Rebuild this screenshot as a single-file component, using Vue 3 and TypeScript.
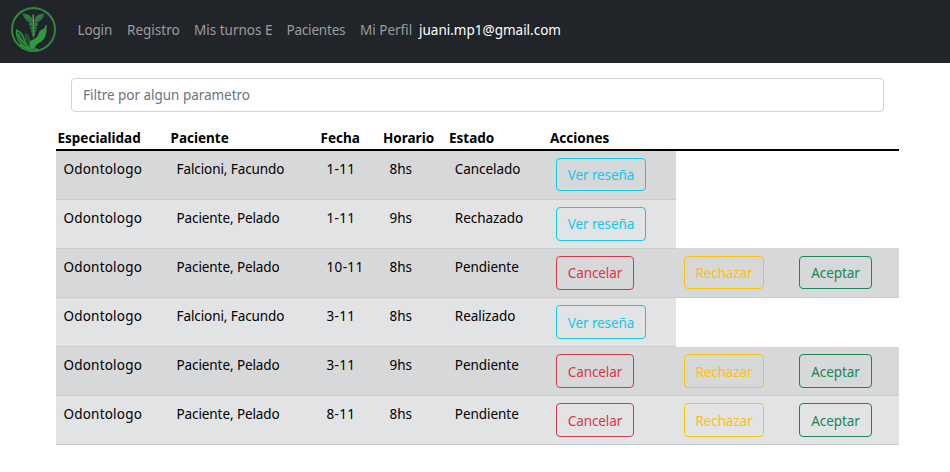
<script setup lang="ts">
import { ref, computed } from 'vue'

interface Turno {
  especialidad: string
  paciente: string
  fecha: string
  horario: string
  estado: string
}

const links = [
  { texto: 'Login', clase: 'login' },
  { texto: 'Registro', clase: 'registro' },
  { texto: 'Mis turnos E', clase: 'turnos' },
  { texto: 'Pacientes', clase: 'pacientes' },
  { texto: 'Mi Perfil', clase: 'perfil' },
]

const columnas = ['Especialidad', 'Paciente', 'Fecha', 'Horario', 'Estado', 'Acciones']

const turnos: Turno[] = [
  { especialidad: 'Odontologo', paciente: 'Falcioni, Facundo', fecha: '1-11', horario: '8hs', estado: 'Cancelado' },
  { especialidad: 'Odontologo', paciente: 'Paciente, Pelado', fecha: '1-11', horario: '9hs', estado: 'Rechazado' },
  { especialidad: 'Odontologo', paciente: 'Paciente, Pelado', fecha: '10-11', horario: '8hs', estado: 'Pendiente' },
  { especialidad: 'Odontologo', paciente: 'Falcioni, Facundo', fecha: '3-11', horario: '8hs', estado: 'Realizado' },
  { especialidad: 'Odontologo', paciente: 'Paciente, Pelado', fecha: '3-11', horario: '9hs', estado: 'Pendiente' },
  { especialidad: 'Odontologo', paciente: 'Paciente, Pelado', fecha: '8-11', horario: '8hs', estado: 'Pendiente' },
]

const filtro = ref('')
const filtrados = computed(() =>
  turnos.filter((t) => Object.values(t).join(' ').toLowerCase().includes(filtro.value.toLowerCase())),
)
</script>

<template>
  <div class="page">
    <nav class="navbar">
      <svg class="logo" viewBox="0 0 46 46">
        <circle cx="22.5" cy="22.5" r="21.5" fill="none" stroke="#2b8a3c" stroke-width="2" />
        <path d="M21.500 16C16 15.500 13 11.500 11.500 6.500c5 .5 9 2 10 6.500zM23.500 16C29 15.500 32 11.500 33.500 6.500c-5 .5-9 2-10 6.500z" fill="#2f7f43" />
        <path d="M13 8.500l8 5.500M15 12l6 3M32 8.500L24 14M30 12l-6 3" stroke="#265f3a" stroke-width=".6" />
        <path d="M18 16h9l-.5 3-1 1 .5 1-1 3-.8 1 .3 1-1 3-1 2-1-2-1-3 .3-1-.8-1-1-3 .5-1-1-1z" fill="#2c7a3f" />
        <path d="M19 19.500h2M24 19.500h2M20 22.500h1.500M23.500 22.500H25M20.500 25.500h1M23.500 25.500h1" stroke="#22382c" stroke-width="1" />
        <path d="M22.300 7.500v8.500" stroke="#9c9c38" stroke-width="1.300" />
        <path d="M22.500 16v13" stroke="#6a8437" stroke-width="1" />
        <path d="M19 42c-.5-3 .5-5-.5-7 2-2.500 5-3 7-4.500 2-1.500 2-6 4.500-7.500 1.500-.8 3-1 3.500-2l.8-2.500c.4-1 1.700-.5 1.500.6-.3 5-.4 9-2.600 12.400C30.500 36 26 35 23.500 41.500z" fill="#2f9a40" />
        <path d="M19.500 42C11 40.500 5 33 5.500 23c5 2 7.500 6 8 11 .5 4 3 6 6 8z" fill="#225331" stroke="#2f9a40" stroke-width="1.200" />
        <path d="M18.500 40.500c-4-4-5-9-3.500-14 3.500 3 4 8 3.500 14z" fill="#22462d" stroke="#2a7d3a" stroke-width=".8" />
        <path d="M7 27c1.500 4 4 8 9 11.500M9 37c4 4 9 6 18 5" fill="none" stroke="#2f9a40" stroke-width="1.300" />
      </svg>
      <a v-for="l in links" :key="l.clase" class="link" :class="l.clase">{{ l.texto }}</a>
      <span class="email">juani.mp1@gmail.com</span>
    </nav>
    <main class="content">
      <div class="search">
        <input v-model="filtro" class="filter" type="text" placeholder="Filtre por algun parametro" />
      </div>
      <div class="head grid">
        <span v-for="c in columnas" :key="c">{{ c }}</span>
      </div>
      <div v-for="(t, i) in filtrados" :key="i" class="row grid" :class="{ short: t.estado !== 'Pendiente', lower: i > 2 }">
        <span class="especialidad">{{ t.especialidad }}</span>
        <span class="paciente">{{ t.paciente }}</span>
        <span class="fecha">{{ t.fecha }}</span>
        <span>{{ t.horario }}</span>
        <span class="estado">{{ t.estado }}</span>
        <template v-if="t.estado === 'Pendiente'">
          <div class="action"><button class="btn cancel">Cancelar</button></div>
          <div class="action"><button class="btn reject">Rechazar</button></div>
          <div class="action"><button class="btn accept">Aceptar</button></div>
        </template>
        <div v-else class="action"><button class="btn review">Ver reseña</button></div>
      </div>
    </main>
  </div>
</template>

<style>
body {
  margin: 0;
  background: #fff;
}
</style>

<style scoped>
.page {
  height: 472px;
  overflow: hidden;
  font-family: 'Noto Sans', 'Open Sans', sans-serif;
  font-size: 13.5px;
  color: #000;
}
.navbar {
  display: flex;
  align-items: center;
  box-sizing: border-box;
  height: 63px;
  padding: 0 0 3px 11px;
  background: #212529;
  color: #9b9d9f;
  white-space: nowrap;
}
.logo {
  width: 46px;
  height: 46px;
  margin: 0 20.5px 1px 0;
}
.link {
  flex: none;
}
.login {
  width: 49.5px;
  letter-spacing: -0.15px;
}
.registro {
  width: 67px;
}
.turnos {
  width: 92.5px;
}
.pacientes {
  width: 73.5px;
  letter-spacing: -0.2px;
}
.perfil {
  width: 59px;
}
.email {
  color: #fff;
}
.content {
  width: 843px;
  margin-left: 56px;
}
.search {
  padding: 15px 15px 14px;
}
.filter {
  display: block;
  box-sizing: border-box;
  width: 813px;
  height: 34px;
  padding: 0 11px;
  border: 1px solid #ced4da;
  border-radius: 4px;
  font: inherit;
  letter-spacing: -0.03px;
  outline: none;
}
.filter::placeholder {
  color: #6c757d;
  opacity: 1;
}
.grid {
  display: grid;
  grid-template-columns: 113px 150px 63px 66px 101px 127px 115px 108px;
  box-sizing: border-box;
  white-space: nowrap;
}
.head {
  height: 25px;
  border-bottom: 2px solid #000;
  font-weight: 700;
  line-height: 24px;
}
.head span {
  padding-left: 1.5px;
}
.head span:nth-child(n + 4) {
  padding-left: 1px;
}
.row {
  height: 49px;
  border-bottom: 1px solid #cbccce;
  background: #e2e3e5;
}
.row:nth-child(odd) {
  background: #d7d8da;
}
.row.short {
  width: 620px;
  grid-template-columns: 113px 150px 63px 66px 101px 127px;
}
.row > span {
  padding: 8px 0 0 7.5px;
  line-height: 20px;
}
.row > .especialidad {
  letter-spacing: 0.2px;
}
.row > .paciente {
  letter-spacing: -0.09px;
}
.row > .fecha {
  letter-spacing: 0.35px;
}
.row > .estado {
  padding-left: 6.8px;
  letter-spacing: -0.05px;
}
.action {
  padding: 7px 0 0 7px;
}
.action + .action {
  padding-left: 8px;
}
.row.short + .row:not(.lower) .action + .action {
  box-shadow: 0 -1px #d7d8da;
}
.btn {
  display: block;
  box-sizing: border-box;
  height: 34px;
  padding: 0;
  border: 1px solid currentColor;
  border-radius: 4px;
  background: transparent;
  font: inherit;
  letter-spacing: -0.1px;
}
.row:nth-child(3) .btn,
.row:nth-child(5) .action + .action .btn {
  height: 33px;
}
.lower .btn {
  padding-top: 2px;
}
.review {
  width: 90px;
  color: #0dcaf0;
}
.cancel {
  width: 78px;
  color: #dc3545;
}
.reject {
  width: 80px;
  color: #ffc107;
}
.accept {
  width: 73px;
  color: #198754;
}
</style>
